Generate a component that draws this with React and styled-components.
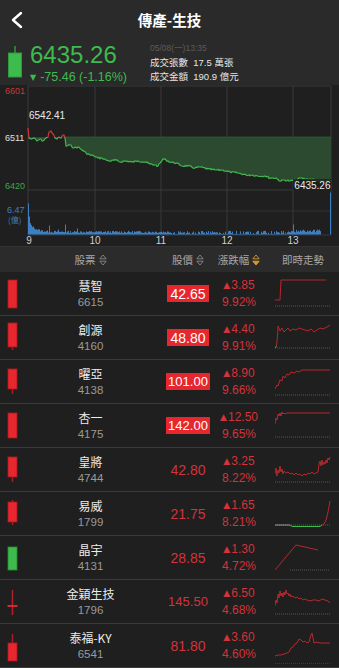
import React from 'react';
import styled, { createGlobalStyle } from 'styled-components';

const RED = '#e8262d';
const RED_TEXT = '#d3333a';
const GREEN = '#3dbb4d';
const BLUE = '#3b7fc4';

const GlobalStyle = createGlobalStyle`
  html, body { margin: 0; padding: 0; background: #1f1f1f; }
  body { font-family: "Liberation Sans", "Noto Sans CJK TC", sans-serif; }
  * { box-sizing: border-box; }
`;

const Page = styled.div`
  width: 339px;
  height: 668px;
  overflow: hidden;
  background: #1f1f1f;
  display: flex;
  flex-direction: column;
`;

const NavBar = styled.header`
  height: 38px;
  display: grid;
  grid-template-columns: 40px 1fr 40px;
  align-items: center;
  background: #2a2a2a;
  padding-top: 3px;
`;

const BackButton = styled.div`
  display: flex;
  align-items: center;
  padding-left: 10px;
`;

const Title = styled.h1`
  margin: 0;
  text-align: center;
  font-family: "Noto Sans CJK TC", sans-serif;
  font-size: 14.5px;
  font-weight: 700;
  color: #fff;
`;

const Quote = styled.section`
  height: 49px;
  display: flex;
  background: #2a2a2a;
  padding-top: 7px;
`;

const QuoteCandle = styled.div`
  width: 30px;
  padding-left: 8px;
  padding-top: 3px;
`;

const PriceBlock = styled.div`
  width: 120px;
  display: flex;
  flex-direction: column;
  color: ${GREEN};
`;

const BigPrice = styled.div`
  font-size: 24px;
  line-height: 24px;
`;

const Change = styled.div`
  margin-top: 3px;
  font-size: 12.5px;
  line-height: 14px;
  white-space: nowrap;
`;

const Tri = styled.span`
  font-family: "DejaVu Sans", sans-serif;
  font-size: ${p => p.$size || 8}px;
  margin-right: ${p => p.$gap || 4}px;
  vertical-align: ${p => p.$lift || 1}px;
`;

const Info = styled.div`
  display: flex;
  flex-direction: column;
  font-family: "Liberation Sans", "Noto Sans CJK TC", sans-serif;
  color: #e6e6e6;
  font-size: 9.5px;
`;

const DateLine = styled.div`
  color: #5c5c5c;
  font-size: 8.5px;
  line-height: 10px;
  margin-bottom: 3px;
`;

const InfoLine = styled.div`
  line-height: 14px;
  white-space: nowrap;
`;

const ChartBox = styled.section`
  height: 162px;
  background: #1f1f1f;
  border-bottom: 1px solid #333;
`;

const ListHeader = styled.div`
  height: 26px;
  display: grid;
  grid-template-columns: 26px 129px 66px 36px 1fr;
  align-items: center;
  background: #2b2b2b;
  color: #a8a8a8;
  font-family: "Noto Sans CJK TC", sans-serif;
  font-size: 10.5px;
`;

const HeadCell = styled.div`
  display: flex;
  align-items: center;
  justify-content: center;
  gap: 3px;
  white-space: nowrap;
  padding-left: ${p => p.$pl || 0}px;
  & > svg { flex-shrink: 0; }
`;

const Row = styled.div`
  height: 44px;
  display: grid;
  grid-template-columns: 26px 129px 66px 36px 1fr;
  align-items: center;
  border-bottom: 1px solid #3a3a3a;
  background: #1f1f1f;
`;

const CandleCell = styled.div`
  height: 43px;
`;

const NameCell = styled.div`
  display: flex;
  flex-direction: column;
  align-items: center;
  align-self: start;
  padding-top: 6px;
`;

const Name = styled.div`
  font-family: "Noto Sans CJK TC", sans-serif;
  color: #ececec;
  font-size: 12px;
  line-height: 16px;
`;

const Code = styled.div`
  color: #9a9a9a;
  font-size: 11.5px;
  line-height: 16px;
`;

const PriceCell = styled.div`
  display: flex;
  justify-content: center;
`;

const Price = styled.div`
  min-width: 42px;
  height: 17px;
  display: flex;
  align-items: center;
  justify-content: center;
  font-size: ${p => (p.$compact ? 13 : 14)}px;
  background: ${p => (p.$boxed ? RED : 'transparent')};
  color: ${p => (p.$boxed ? '#fff' : RED_TEXT)};
  padding: 0 2px;
`;

const ChangeCell = styled.div`
  display: flex;
  flex-direction: column;
  align-items: center;
  align-self: start;
  padding-top: 5px;
  color: ${RED_TEXT};
  font-size: 12px;
  line-height: 17px;
  white-space: nowrap;
`;

const SparkCell = styled.div`
  align-self: start;
  padding-left: 18px;
  padding-top: 6px;
  height: 43px;
  overflow: hidden;
`;

/* ---------- helpers ---------- */
function rng(seed) {
  let s = seed;
  return () => {
    s = (s * 9301 + 49297) % 233280;
    return s / 233280;
  };
}

const toPath = pts => pts.map((p, i) => `${i ? 'L' : 'M'}${p[0]},${p[1].toFixed(1)}`).join(' ');

function BackIcon() {
  return (
    <svg width="14" height="18" viewBox="0 0 14 18">
      <polyline points="11,2 3,9 11,16" fill="none" stroke="#fff" strokeWidth="2.4" strokeLinecap="round" strokeLinejoin="round" />
    </svg>
  );
}

function SortIcon({ active }) {
  const c = active ? '#d99a35' : '#8a8a8a';
  return (
    <svg width="8" height="12" viewBox="0 0 8 12">
      <path d="M4 1 L7.2 4.8 L0.8 4.8 Z" fill="none" stroke={c} strokeWidth="0.9" strokeLinejoin="round" />
      <path d="M4 11 L7.2 7.2 L0.8 7.2 Z" fill={active ? c : 'none'} stroke={c} strokeWidth="0.9" strokeLinejoin="round" />
    </svg>
  );
}

function Candle({ c }) {
  const cx = 12.5;
  if (c.doji) {
    return (
      <svg width="26" height="43">
        <line x1={cx} y1={c.wick[0]} x2={cx} y2={c.wick[1]} stroke="#b32228" strokeWidth="1.5" />
        <line x1="7.5" y1={c.mid} x2="17.5" y2={c.mid} stroke="#d22a30" strokeWidth="2" />
      </svg>
    );
  }
  const col = c.green ? GREEN : RED;
  const edge = c.green ? '#2a8a36' : '#a81b21';
  return (
    <svg width="26" height="43">
      {c.wick && <line x1={cx} y1={c.wick[0]} x2={cx} y2={c.wick[1]} stroke={edge} strokeWidth="1.5" />}
      <rect x="8" y={c.body[0]} width="9" height={c.body[1] - c.body[0]} fill={col} stroke={edge} strokeWidth="0.8" />
    </svg>
  );
}

function QuoteCandleIcon() {
  return (
    <svg width="14" height="34">
      <line x1="7" y1="0" x2="7" y2="8" stroke="#2f9a3d" strokeWidth="1.5" />
      <rect x="0.5" y="7" width="13" height="24" fill={GREEN} stroke="#2f9a3d" strokeWidth="1" />
    </svg>
  );
}

function Spark({ s }) {
  return (
    <svg width="56" height="34" viewBox="0 0 56 34">
      {s.dot != null && (
        <line x1={s.dx ? s.dx[0] : 0} y1={s.dot} x2={s.dx ? s.dx[1] : 55} y2={s.dot} stroke="#666" strokeWidth="0.8" strokeDasharray="1 1" />
      )}
      {s.segs.map((seg, i) => (
        <path key={i} d={toPath(seg.pts)} fill="none" stroke={seg.color || '#b8272d'} strokeWidth="1" strokeLinejoin="round" />
      ))}
    </svg>
  );
}

/* ---------- main chart ---------- */
const KEY = [
  [28, 130], [29, 140], [31, 141], [34, 140], [37, 143], [40, 141], [43, 143], [46, 140], [48, 139],
  [49, 134], [51, 133], [53, 136], [55, 140], [57, 141], [59, 139], [61, 140], [62, 138], [64, 137],
  [65, 140], [66, 148], [70, 147], [74, 150], [78, 149], [82, 152], [86, 155], [90, 157], [94, 158],
  [98, 160], [102, 160], [106, 162], [110, 163], [116, 162], [120, 164], [126, 163], [132, 164],
  [138, 163], [145, 164], [150, 166], [155, 167], [158, 168], [161, 164], [163, 161], [166, 162],
  [170, 164], [176, 165], [182, 168], [188, 168], [195, 170], [200, 169], [208, 171], [215, 172],
  [222, 172], [230, 174], [238, 175], [246, 177], [252, 177], [258, 178], [265, 178], [270, 180],
  [276, 180], [280, 183], [284, 182], [290, 183], [296, 182], [300, 180], [305, 181], [310, 181],
  [316, 182], [322, 183], [328, 183], [331, 182],
];

function buildLine() {
  const r = rng(7);
  const pts = [];
  for (let i = 0; i < KEY.length - 1; i++) {
    const [x0, y0] = KEY[i];
    const [x1, y1] = KEY[i + 1];
    for (let x = x0; x < x1; x++) {
      const t = (x - x0) / (x1 - x0);
      let y = y0 + (y1 - y0) * t - 87;
      if (x > 30 && x !== x0) y += (r() - 0.5) * 1.6;
      pts.push([x, y]);
    }
  }
  pts.push([331, KEY[KEY.length - 1][1] - 87]);
  return pts;
}

function buildVolume() {
  const r = rng(13);
  const bars = [];
  for (let x = 28; x <= 320; x++) {
    let h = 1.5 + 11 * Math.exp(-(x - 28) / 6) + r() * 2.2;
    if (x === 28) h = 31;
    if (x === 29) h = 18;
    if (x === 49) h = 9;
    if (x === 65) h = 10;
    if (x === 77) h = 6;
    if (x === 58) h = 5;
    if (x > 170 && r() < 0.35) h = 0.6;
    if (x >= 290) h = 2 + r() * 3;
    if (x === 293) h = 10;
    bars.push([x, h]);
  }
  bars.push([330, 42]);
  return bars;
}

function MainChart() {
  const base = 52;
  const pts = buildLine();
  const d = toPath(pts);
  const fill = `M${pts[0][0]},${base} ` + pts.map(p => `L${p[0]},${p[1].toFixed(1)}`).join(' ') + ` L331,${base} Z`;
  const vol = buildVolume();
  const grids = [28, 95, 161, 227, 293, 331];
  const xl = [['9', 29], ['10', 95], ['11', 161], ['12', 227], ['13', 293]];
  return (
    <svg width="339" height="162" viewBox="0 0 339 162" style={{ display: 'block' }}>
      <defs>
        <clipPath id="above"><rect x="0" y="0" width="339" height={base} /></clipPath>
        <clipPath id="below"><rect x="0" y={base} width="339" height={120} /></clipPath>
      </defs>
      {grids.map(x => (
        <line key={x} x1={x} y1="1" x2={x} y2="150" stroke="#3a3a3a" strokeWidth="1" />
      ))}
      <line x1="28" y1="1" x2="331" y2="1" stroke="#3a3a3a" />
      <line x1="28" y1="105" x2="331" y2="105" stroke="#3a3a3a" />
      <line x1="28" y1="126" x2="331" y2="126" stroke="#333" />
      <line x1="28" y1="150" x2="331" y2="150" stroke="#3a3a3a" />
      <path d={fill} fill="#2c4a2f" clipPath="url(#below)" />
      <line x1="62" y1={base} x2="331" y2={base} stroke="#2f5a33" strokeWidth="0.8" />
      <path d={d} fill="none" stroke="#d0343a" strokeWidth="1.2" clipPath="url(#above)" />
      <path d={d} fill="none" stroke="#3fb94d" strokeWidth="1.2" clipPath="url(#below)" />
      {vol.map(([x, h]) => (
        <rect key={x} x={x} y={149.5 - h} width="1" height={h} fill={BLUE} />
      ))}
      <g fontFamily="Liberation Sans, sans-serif" fontSize="9">
        <text x="5" y="9" fill="#c43a3c">6601</text>
        <text x="5" y="55.5" fill="#e0e0e0">6511</text>
        <text x="5" y="103.5" fill="#3aa84a">6420</text>
        <text x="7" y="128" fill={BLUE}>6.47</text>
        <text x="8" y="138" fill={BLUE} fontFamily="Noto Sans CJK TC, sans-serif" fontSize="8">(億)</text>
      </g>
      <text x="29" y="33.5" fill="#eaeaea" fontSize="10" fontFamily="Liberation Sans, sans-serif">6542.41</text>
      <rect x="293" y="94" width="38" height="12" fill="#1f1f1f" opacity="0.85" />
      <text x="330.5" y="103.5" fill="#eaeaea" fontSize="10" textAnchor="end" fontFamily="Liberation Sans, sans-serif">6435.26</text>
      {xl.map(([t, x]) => (
        <text key={t} x={x} y="159" fill="#cfcfcf" fontSize="10" textAnchor="middle" fontFamily="Liberation Sans, sans-serif">{t}</text>
      ))}
    </svg>
  );
}

/* ---------- data ---------- */
const ROWS = [
  {
    name: '慧智', code: '6615', price: '42.65', boxed: true, chg: '3.85', pct: '9.92%',
    candle: { body: [8, 36] },
    spark: { dot: 28, segs: [{ pts: [[0, 22], [5, 22], [6, 2], [51, 2]] }] },
  },
  {
    name: '創源', code: '4160', price: '48.80', boxed: true, chg: '4.40', pct: '9.91%',
    candle: { body: [7, 31], wick: [31, 34] },
    spark: {
      dot: 26,
      segs: [
        { color: GREEN, pts: [[0, 26], [1.5, 24]] },
        { pts: [[1.5, 24], [2.5, 14], [3, 4], [5, 9], [7, 6], [9, 10], [11, 8], [13, 6], [15, 9], [18, 7], [21, 8], [24, 6], [27, 7], [30, 8], [33, 9], [36, 7], [39, 10], [42, 8], [45, 6], [48, 7], [52, 5], [55, 3]] },
      ],
    },
  },
  {
    name: '曜亞', code: '4138', price: '101.00', boxed: true, chg: '8.90', pct: '9.66%',
    candle: { body: [9, 29], wick: [29, 34] },
    spark: { dot: 29, segs: [{ pts: [[0, 23], [2, 19], [3, 20], [5, 14], [7, 15], [8, 10], [10, 12], [12, 8], [14, 9], [16, 6], [19, 7], [22, 5], [24, 6], [27, 4], [55, 4]] }] },
  },
  {
    name: '杏一', code: '4175', price: '142.00', boxed: true, chg: '12.50', pct: '9.65%',
    candle: { body: [9, 34] },
    spark: { dot: 27, segs: [{ pts: [[0, 14], [1, 8], [2, 10], [3, 4], [4, 6], [5, 3], [6, 6], [7, 2], [8, 4], [9, 3], [10, 4], [12, 3], [55, 3]] }] },
  },
  {
    name: '皇將', code: '4744', price: '42.80', chg: '3.25', pct: '8.22%',
    candle: { body: [9, 29], wick: [29, 34] },
    spark: {
      dot: 28,
      segs: [{ pts: [[0, 20], [1, 14], [2, 22], [3, 16], [4, 19], [5, 12], [6, 18], [7, 15], [8, 20], [9, 17], [11, 19], [13, 18], [15, 20], [17, 19], [19, 21], [21, 19], [23, 21], [25, 20], [27, 22], [29, 20], [31, 21], [33, 19], [35, 20], [37, 18], [39, 20], [41, 19], [43, 18], [44, 10], [45, 7], [46, 12], [47, 6], [48, 11], [49, 8], [50, 10], [51, 6], [52, 9], [53, 4], [54, 6], [55, 3]] }],
    },
  },
  {
    name: '易威', code: '1799', price: '21.75', chg: '1.65', pct: '8.21%',
    candle: { body: [10, 30], wick: [8, 33] },
    spark: {
      dot: 27,
      segs: [
        { color: '#9a9a9a', pts: [[0, 27], [15, 27]] },
        { color: GREEN, pts: [[15, 27], [17, 28.5], [45, 28.5], [47, 27]] },
        { pts: [[47, 27], [49, 26], [51, 22], [53, 14], [55, 3]] },
      ],
    },
  },
  {
    name: '晶宇', code: '4131', price: '28.85', chg: '1.30', pct: '4.72%',
    candle: { body: [11, 34], green: true },
    spark: { dot: 28, dx: [15, 55], segs: [{ pts: [[0, 28], [21, 3], [43, 8]] }] },
  },
  {
    name: '金穎生技', code: '1796', price: '145.50', chg: '6.50', pct: '4.68%',
    candle: { doji: true, wick: [10, 35], mid: 26 },
    spark: {
      dot: 28,
      segs: [{ pts: [[0, 20], [1, 14], [2, 17], [3, 8], [4, 12], [5, 5], [6, 10], [7, 7], [8, 11], [9, 6], [10, 9], [11, 4], [12, 8], [13, 7], [14, 10], [15, 8], [16, 11], [18, 10], [20, 12], [22, 11], [24, 13], [26, 12], [28, 14], [30, 13], [32, 14], [35, 15], [38, 14], [41, 14], [44, 15], [47, 13], [50, 14], [53, 15], [55, 17]] }],
    },
  },
  {
    name: '泰福-KY', code: '6541', price: '81.80', chg: '3.60', pct: '4.60%',
    candle: { body: [19, 37], wick: [10, 19] },
    spark: {
      dot: 34,
      segs: [{ pts: [[0, 26], [3, 25], [6, 25], [9, 24], [12, 23], [14, 22], [16, 18], [18, 17], [20, 14], [22, 13], [24, 9], [26, 10], [28, 12], [30, 11], [32, 13], [34, 12], [36, 5], [37, 3], [38, 8], [39, 13], [41, 12], [45, 13], [50, 13], [55, 13]] }],
    },
  },
];

export default function App() {
  return (
    <Page>
      <GlobalStyle />
      <NavBar>
        <BackButton><BackIcon /></BackButton>
        <Title>傳產-生技</Title>
        <div />
      </NavBar>
      <Quote>
        <QuoteCandle><QuoteCandleIcon /></QuoteCandle>
        <PriceBlock>
          <BigPrice>6435.26</BigPrice>
          <Change><Tri $size={8} $gap={4}>▼</Tri>-75.46 (-1.16%)</Change>
        </PriceBlock>
        <Info>
          <DateLine>05/08(一)13:35</DateLine>
          <InfoLine>成交張數&nbsp;&nbsp;17.5 萬張</InfoLine>
          <InfoLine>成交金額&nbsp;&nbsp;190.9 億元</InfoLine>
        </Info>
      </Quote>
      <ChartBox><MainChart /></ChartBox>
      <ListHeader>
        <div />
        <HeadCell>股票<SortIcon /></HeadCell>
        <HeadCell>股價<SortIcon /></HeadCell>
        <HeadCell>漲跌幅<SortIcon active /></HeadCell>
        <HeadCell $pl={10}>即時走勢</HeadCell>
      </ListHeader>
      {ROWS.map(r => (
        <Row key={r.code}>
          <CandleCell><Candle c={r.candle} /></CandleCell>
          <NameCell>
            <Name>{r.name}</Name>
            <Code>{r.code}</Code>
          </NameCell>
          <PriceCell>
            <Price $boxed={r.boxed} $compact={r.price.length > 5}>{r.price}</Price>
          </PriceCell>
          <ChangeCell>
            <div><Tri $size={9} $gap={1} $lift={1}>▲</Tri>{r.chg}</div>
            <div>{r.pct}</div>
          </ChangeCell>
          <SparkCell><Spark s={r.spark} /></SparkCell>
        </Row>
      ))}
    </Page>
  );
}
